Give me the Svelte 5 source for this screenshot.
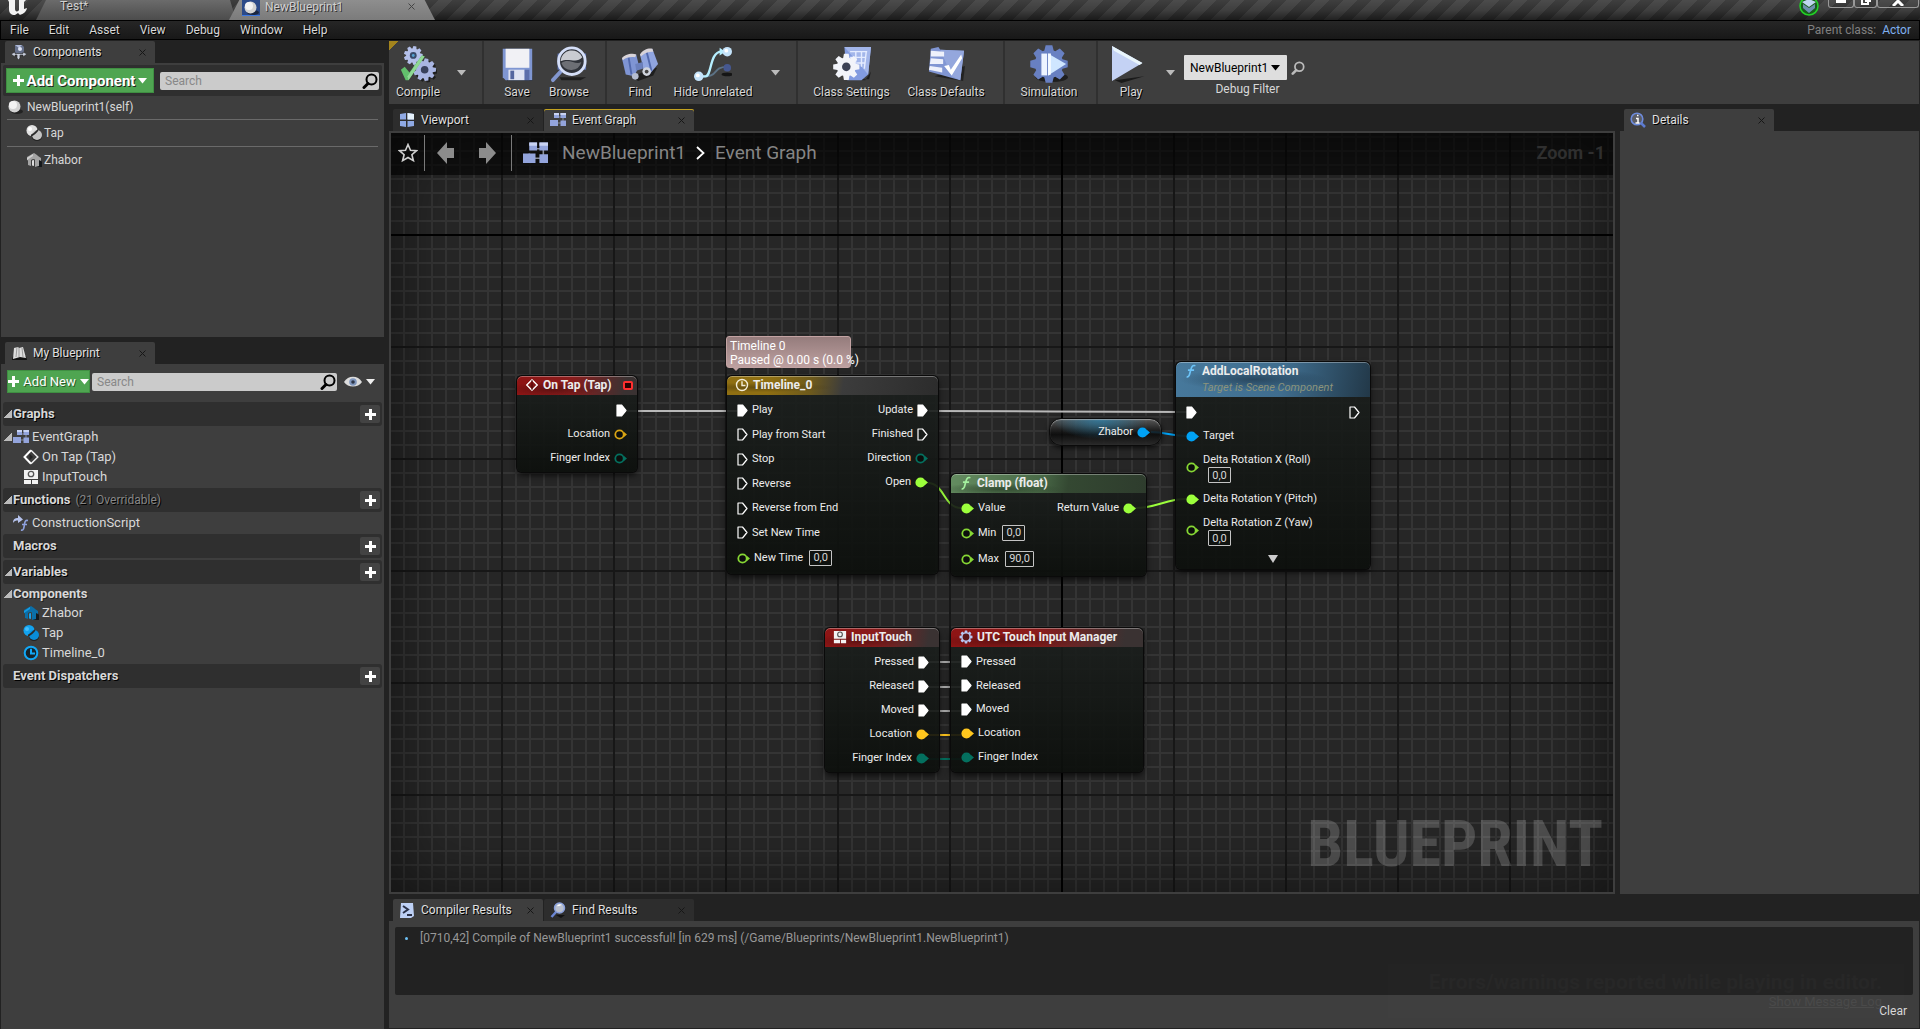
<script>
  const menus = ['File', 'Edit', 'Asset', 'View', 'Debug', 'Window', 'Help'];

  const toolGroups = [
    { name: 'compile', items: [{ icon: 'compile', label: 'Compile', w: 56 }], drop: 'Compile options' },
    { name: 'asset', items: [{ icon: 'save', label: 'Save', w: 52 }, { icon: 'browse', label: 'Browse', w: 52 }] },
    { name: 'lookup', items: [{ icon: 'find', label: 'Find', w: 52 }, { icon: 'hide', label: 'Hide Unrelated', w: 94 }], drop: 'Hide options' },
    { name: 'class', items: [{ icon: 'settings', label: 'Class Settings', w: 93 }, { icon: 'defaults', label: 'Class Defaults', w: 96 }] },
    { name: 'sim', items: [{ icon: 'simulate', label: 'Simulation', w: 74 }] },
    { name: 'play', items: [{ icon: 'play', label: 'Play', w: 54 }], drop: 'Play options' }
  ];

  const sections = [
    { title: 'Graphs', open: true, items: [
      { icon: 'graph', label: 'EventGraph', level: 'root', open: true },
      { icon: 'event', label: 'On Tap (Tap)', level: 'child' },
      { icon: 'touch', label: 'InputTouch', level: 'child' }
    ] },
    { title: 'Functions', note: '(21 Overridable)', open: true, items: [
      { icon: 'construct', label: 'ConstructionScript', level: 'root' }
    ] },
    { title: 'Macros', items: [] },
    { title: 'Variables', open: true, items: [
      { label: 'Components', level: 'category', open: true },
      { icon: 'houseBlue', label: 'Zhabor', level: 'child' },
      { icon: 'tapBlue', label: 'Tap', level: 'child' },
      { icon: 'clockBlue', label: 'Timeline_0', level: 'child' }
    ] },
    { title: 'Event Dispatchers', items: [] }
  ];

  const white = '#ffffff';
  const gold = '#ffc61e';
  const teal = '#04705f';
  const lime = '#9cff3c';
  const blue = '#00a2f5';
  const goldDim = '#d9a514';
  const limeDim = '#86d734';

  const exec = (label, on) => ({ kind: 'exec', label, on, color: white });
  const data = (label, color, on, value) => ({ kind: 'data', label, color, on, value });

  const nodes = [
    { x: 126, y: 243, w: 120, h: 96, tone: 'red', icon: 'eventNode', title: 'On Tap (Tap)', delegate: true,
      ins: [], outs: [exec('', true), data('Location', goldDim), data('Finger Index', teal)] },
    { x: 336, y: 243, w: 211, h: 198, tone: 'amber', icon: 'clock', title: 'Timeline_0',
      ins: [exec('Play', true), exec('Play from Start'), exec('Stop'), exec('Reverse'), exec('Reverse from End'), exec('Set New Time'), data('New Time', limeDim, false, '0,0')],
      outs: [exec('Update', true), exec('Finished'), data('Direction', teal), data('Open', lime, true)] },
    { x: 560, y: 341, w: 195, h: 102, tone: 'olive', icon: 'fnGreen', title: 'Clamp (float)',
      ins: [data('Value', lime, true), data('Min', limeDim, false, '0,0'), data('Max', limeDim, false, '90,0')],
      outs: [data('Return Value', lime, true)] },
    { x: 785, y: 229, w: 194, h: 207, tone: 'blue', icon: 'fnBlue', title: 'AddLocalRotation', sub: 'Target is Scene Component', more: true,
      ins: [exec('', true), data('Target', blue, true), { ...data('Delta Rotation X (Roll)', limeDim, false, '0,0'), stacked: true }, data('Delta Rotation Y (Pitch)', lime, true), { ...data('Delta Rotation Z (Yaw)', limeDim, false, '0,0'), stacked: true }],
      outs: [exec('')] },
    { x: 434, y: 495, w: 114, h: 144, tone: 'red', icon: 'touch', title: 'InputTouch',
      ins: [], outs: [exec('Pressed', true), exec('Released', true), exec('Moved', true), data('Location', gold, true), data('Finger Index', teal, true)] },
    { x: 560, y: 495, w: 192, h: 144, tone: 'red', icon: 'cog', title: 'UTC Touch Input Manager',
      ins: [exec('Pressed', true), exec('Released', true), exec('Moved', true), data('Location', gold, true), data('Finger Index', teal, true)], outs: [] }
  ];

  const wires = [
    { d: 'M236 278H346', c: '#b8b8b8' },
    { d: 'M538 278C640 278 690 279 796 279', c: '#b8b8b8' },
    { d: 'M537 350C553 350 553 375 570 375', c: lime },
    { d: 'M744 375C765 375 775 366 795 366', c: lime },
    { d: 'M760 299C775 299 780 303 795 303', c: blue },
    { d: 'M538 529H570', c: '#a8a8a8' },
    { d: 'M538 554H570', c: '#a8a8a8' },
    { d: 'M538 578H570', c: '#a8a8a8' },
    { d: 'M538 602H570', c: gold },
    { d: 'M538 626H570', c: teal }
  ];

  function gear(cx, cy, outer, inner, teeth) {
    const pts = [];
    for (let i = 0; i < teeth; i++) {
      const a = (i / teeth) * Math.PI * 2;
      const s = Math.PI / teeth;
      for (const [k, r] of [[-0.85, inner], [-0.45, outer], [0.45, outer], [0.85, inner]]) {
        pts.push(`${(cx + Math.cos(a + k * s) * r).toFixed(1)} ${(cy + Math.sin(a + k * s) * r).toFixed(1)}`);
      }
    }
    return 'M' + pts.join('L') + 'Z';
  }
</script>

{#snippet caret()}
  <svg class="caret" width="9" height="6" viewBox="0 0 9 6" aria-hidden="true"><path d="M0 0h9L4.500 5.500z" fill="currentColor" /></svg>
{/snippet}

{#snippet plus()}
  <svg width="11" height="11" viewBox="0 0 11 11" aria-hidden="true"><path d="M4 0h3v4h4v3H7v4H4V7H0V4h4z" fill="#fff" /></svg>
{/snippet}

{#snippet lens()}
  <svg class="lens" width="16" height="16" viewBox="0 0 16 16" aria-hidden="true"><circle cx="9.500" cy="6.500" r="5" fill="none" stroke="currentColor" stroke-width="2" /><path d="M6 10.500L2 14.500" stroke="currentColor" stroke-width="3" stroke-linecap="round" /></svg>
{/snippet}

{#snippet icon(name, size)}
  {#if ['compile', 'save', 'browse', 'find', 'hide', 'settings', 'defaults', 'simulate', 'play'].includes(name)}
    <svg width={size} height={size} viewBox="0 0 40 40" aria-hidden="true">
      {#if name === 'compile'}
        <path d={gear(29, 28, 11.5, 8.5, 9)} fill="#111" opacity=".7" />
        <path d={gear(15, 11, 10, 7.5, 9)} fill="#b4c0ea" /><circle cx="15" cy="11" r="3.600" fill="#3a4a6a" /><circle cx="15" cy="11" r="1.500" fill="#55a0d0" />
        <path d={gear(27, 26, 12, 9, 9)} fill="#a9b5e2" /><circle cx="27" cy="26" r="4" fill="#39415c" />
        <path d="M2 26l4-3 5 6L24 11l3 1L10 37H7z" fill="#62c06c" /><path d="M24 11l3 1-17 25-1-4z" fill="#8fd894" />
      {:else if name === 'save'}
        <path d="M8 33h28v5H10z" fill="#111" opacity=".7" />
        <path d="M5 4h31v33H8l-3-3z" fill="#7f96d2" /><path d="M8 4h25v20H8z" fill="#f1f1f5" /><path d="M11 26h17v11H11z" fill="#dfe3f2" /><path d="M13 27h4v9h-4z" fill="#54669f" /><path d="M28 26h5v11h-5z" fill="#5c6eaa" />
      {:else if name === 'browse'}
        <path d="M10 34h28l-6 3H12z" fill="#111" opacity=".7" /><path d="M8 9h30v17H8z" fill="#5f76b8" />
        <path d="M13 26L3 37" stroke="#8397cf" stroke-width="4" stroke-linecap="round" /><circle cx="23" cy="17" r="14" fill="#30333a" stroke="#d5dff8" stroke-width="3" />
        <path d="M11 17a12 12 0 0 1 23-4C28 20 20 13 11 17z" fill="#c9cbd1" /><path d="M12 19c8-6 15 3 21-1a11 11 0 0 1-21 1z" fill="#6d6f75" />
      {:else if name === 'find'}
        <path d="M12 34l16-8 10-2-4 8-16 6z" fill="#111" opacity=".7" />
        <path d="M1 14l15-4 3 12-5 11-9-2z" fill="#7f95d4" /><path d="M20 10L33 4l6 16-10 12-5-5z" fill="#90a5e0" /><path d="M27 7l5 20M8 13l3 18" stroke="#5269ad" stroke-width="2" /><path d="M1 14c2-4 11-6 15-4l-1 3c-4-1-10 0-13 3zM20 10c3-5 9-7 13-6l1 3c-5 0-9 1-13 5z" fill="#d8d3d8" /><path d="M15 20l8-2v7l-7 2z" fill="#6b80bd" /><circle cx="15" cy="33" r="3.500" fill="#b5bdd0" /><circle cx="27" cy="28" r="4.500" fill="#d0d4dd" /><circle cx="27" cy="28" r="2" fill="#444" />
      {:else if name === 'hide'}
        <path d="M5 33c24 2 12-10 30-10" fill="none" stroke="#5c7285" stroke-width="2" /><path d="M5 33h7c7 0 4-26 17-26" fill="none" stroke="#b6efff" stroke-width="2.500" /><path d="M27 3l6 4-6 4z" fill="#b6efff" /><ellipse cx="35" cy="31" rx="6" ry="2" fill="#151515" /><circle cx="35" cy="24" r="4" fill="#465890" /><circle cx="35" cy="7" r="5" fill="#c4e3fa" /><circle cx="5" cy="33" r="5" fill="#c4e3fa" /><circle cx="34" cy="6" r="2" fill="#fff" /><circle cx="4" cy="32" r="2" fill="#fff" />
      {:else if name === 'settings'}
        <path d="M12 36h26l2-8-6 9z" fill="#111" opacity=".7" /><path d="M12 2h28l-3 29-7 6H15z" fill="#829be0" /><path d="M12 2h28l-3 29z" fill="#a3b6ea" /><path d="M18 7h18M18 13h17M25 19h9M24 7v18M30 7v16M35 7l-2 18" stroke="#e4ebff" stroke-width="1.500" fill="none" />
        <path d={gear(14, 23, 14, 10, 8)} fill="#f2f4fa" /><circle cx="14" cy="23" r="4.500" fill="#3b4256" />
      {:else if name === 'defaults'}
        <path d="M8 33l30 5 2-16z" fill="#111" opacity=".6" /><path d="M4 4l8-2 2 3 25 1-4 31L2 28z" fill="#8196d3" /><path d="M14 5l25 1-4 31-9-4z" fill="#94a7dd" /><path d="M4 6l14 1v5H4zM4 14l13 1v5H3zM3 22l13 2v5L2 26z" fill="#eef1fb" /><path d="M18 22l5-1 2 5L36 10l1 4-11 18z" fill="#fff" />
      {:else if name === 'simulate'}
        <ellipse cx="23" cy="34" rx="17" ry="5" fill="#111" opacity=".7" /><path d={gear(20, 20, 20, 15, 8)} fill="#6880c2" /><path d="M12 9h6v23h-6z" fill="#eef4ff" /><path d="M19 9l19 11-19 12z" fill="#cfe6ff" /><path d="M19 9h3v22l-3 1z" fill="#f5faff" />
      {:else}
        <path d="M3 37l31-4-24 7z" fill="#111" opacity=".8" /><path d="M0 1l32 18L0 38z" fill="#c4d2f4" /><path d="M0 1l32 18-3 2L2 6z" fill="#e9f5fb" />
      {/if}
    </svg>
  {:else}
    <svg width={size} height={size} viewBox="0 0 16 16" aria-hidden="true">
      {#if name === 'graph'}
        <path d="M7 5h4M4 8v3M13 5v6M6 11h5" stroke="#8a8f9c" stroke-width="1" /><path d="M4 1h5v5H4zM10.500 1H16v5h-5.500zM0 8h8v6H0zM10.500 8.500H16V14h-5.500z" fill="#93a4dc" /><path d="M4 1h5v2H4zM10.500 1H16v2h-5.500z" fill="#c9d3f3" />
      {:else if name === 'event'}
        <path d="M8 1.200L1.500 8 8 14.800" fill="none" stroke="#fff" stroke-width="2" /><path d="M8 1.200L14.800 8 8 14.800" fill="none" stroke="#eee" stroke-width="1.500" /><path d="M6.500 4.500v7L10 8z" fill="#222" />
      {:else if name === 'eventNode'}
        <path d="M8 2L2 8l6 6 6-6z" fill="none" stroke="#fff" stroke-width="1.600" /><path d="M8 2v12" stroke="#400" stroke-width="1" />
      {:else if name === 'touch'}
        <path d="M1 1h14v9H1zM1 11h7v4H1zM9 11h6v4H9z" fill="#f2f2f2" /><circle cx="8" cy="5" r="2.700" fill="none" stroke="#555" stroke-width="1.300" />
      {:else if name === 'construct'}
        <path d="M0 8c0-4 2-5 5-5V0l5 4.500L5 8V5.500C3 5.500 1 6 0 8z" fill="#b5c2ec" /><path d="M8 15c3 1 3-3 3.500-6s1-4 3.500-3.500M9 9.500h5" fill="none" stroke="#8ea1de" stroke-width="1.600" />
      {:else if name === 'house' || name === 'houseBlue'}
        <path d="M9 15h7v-5l-2-3z" fill="#15191c" /><path d="M8 1L1 5v3l1 .5V13l3 1V8l2-1 2 .5V15l4-1V8l2 1V6l-3-2-1-1z" fill={name === 'house' ? '#a4a4a4' : '#0b6fa8'} /><path d="M6 8.500L8 8v6l-2-.5z" fill={name === 'house' ? '#ddd' : '#19a2ea'} /><path d="M7 2L1 6v2l6-4z" fill={name === 'house' ? '#d0d0d0' : '#149be3'} />
      {:else if name === 'tap' || name === 'tapBlue'}
        <ellipse cx="11" cy="12" rx="5" ry="4" fill="#151515" opacity=".7" /><circle cx="6" cy="5.500" r="5.500" fill={name === 'tap' ? '#e2e2e2' : '#12a3f0'} /><circle cx="11" cy="10" r="5" fill={name === 'tap' ? '#c4c4c4' : '#0a8cd8'} /><path d="M5 10.500C8 10 10 7 12 5" stroke="#2a2a2a" stroke-width="1.600" fill="none" /><circle cx="4" cy="4" r="2" fill={name === 'tap' ? '#fff' : '#46bdfa'} />
      {:else if name === 'clock' || name === 'clockBlue'}
        <g fill="none" stroke={name === 'clock' ? '#f4eeda' : '#12a8f7'} stroke-width={name === 'clock' ? 1.6 : 2}><circle cx="8" cy="8" r="6.300" fill={name === 'clock' ? 'none' : '#16242c'} /><path d="M8 3.800V8.500h4" /></g>
      {:else if name === 'fnGreen' || name === 'fnBlue'}
        <path d="M3 14.500c3 1 3.500-3 4.500-7S9.500.800 13 2M4.500 7h7" fill="none" stroke={name === 'fnGreen' ? '#a4f09e' : '#6cc3f7'} stroke-width="1.900" />
      {:else if name === 'cog'}
        <path d={gear(8, 8, 7.5, 5.5, 8)} fill="#b7c6f2" /><circle cx="8" cy="8" r="3.900" fill="#5a1418" />
      {:else if name === 'components'}
        <path d="M4 1h7l2 2v7l-5 2-4-2z" fill="#66708a" /><path d="M4 1h7l-3 3z" fill="#aeb9d8" /><circle cx="9" cy="5" r="2" fill="#dfe4f5" /><path d="M0 10l4-2v1.500h8V8l4 2-4 3v-2H9v3L7.500 16 6 14v-3H4v2z" fill="#c9cfdd" stroke="#222" stroke-width=".6" />
      {:else if name === 'book'}
        <path d="M1 15h15l-1-4H2z" fill="#111" /><path d="M3 3l4-1 1 1 4-1 3 11-6-1-7 2z" fill="#dedede" /><path d="M6 2L5 12M8 3v9M11 3l1 9" stroke="#8a8a8a" stroke-width=".8" />
      {:else if name === 'viewport'}
        <path d="M1 2l6-1v6.500H1zM8.500 1L15 2v5.500H8.500zM1 9h6v6l-6-1zM8.500 9H15v5l-6.500 1z" fill="#8fa9e4" /><path d="M8.500 1L15 2v5.500H8.500z" fill="#e5f1fb" />
      {:else if name === 'info'}
        <circle cx="7" cy="7" r="5.800" fill="#5c5e66" stroke="#6d8bdc" stroke-width="1.600" /><path d="M11 11l4 4" stroke="#5d7bd0" stroke-width="2.500" /><path d="M6 6.500h2V11M5.500 11h4M7 3.500h1.500" stroke="#fff" stroke-width="1.500" fill="none" />
      {:else if name === 'log'}
        <path d="M2 1h12l1 13-3 2H1z" fill="#bdd0f5" /><path d="M4 4l5 3.500L4 11M8 13h5" stroke="#2a3148" stroke-width="2" fill="none" />
      {:else if name === 'glass'}
        <path d="M6 13h9l-4 3z" fill="#111" /><path d="M6 10l-4.500 5" stroke="#6b86d3" stroke-width="2.500" /><circle cx="9.500" cy="6" r="5" fill="#b9bfcd" stroke="#8ba1dc" stroke-width="1.500" /><path d="M7 4c1-2 4-2 5-1-2 0-3 2-5 1z" fill="#fff" />
      {:else if name === 'ball'}
        <ellipse cx="10" cy="12.500" rx="6" ry="2.500" fill="#111" opacity=".6" /><circle cx="7.500" cy="7.500" r="6" fill="#d3d3d3" /><circle cx="6" cy="6" r="4" fill="#f3f3f3" />
      {/if}
    </svg>
  {/if}
{/snippet}

{#snippet tab(ic, label, state)}
  <div class="tab {state}">
    {@render icon(ic, 16)}
    <span>{label}</span>
    <button class="close" aria-label="Close {label}"><svg width="7" height="7" viewBox="0 0 7 7" aria-hidden="true"><path d="M.5.5l6 6M6.500.500l-6 6" stroke="currentColor" /></svg></button>
  </div>
{/snippet}

{#snippet pinShape(p)}
  {#if p.kind === 'exec'}
    <svg class="pin" width="11" height="13" viewBox="0 0 11 13" aria-hidden="true"><path d="M1 1h4.500l4.500 5.500L5.500 12H1z" fill={p.on ? '#fff' : 'none'} stroke="#fff" stroke-width="1.200" stroke-linejoin="round" /></svg>
  {:else}
    <svg class="pin" width="13" height="11" viewBox="0 0 13 11" aria-hidden="true"><circle cx="5.500" cy="5.500" r="4.200" fill={p.on ? p.color : '#0c0e0c'} stroke={p.color} stroke-width="1.800" /><path d="M10 3l3 2.500L10 8z" fill={p.color} /></svg>
  {/if}
{/snippet}

<div class="app">
  <header class="titlebar">
    <svg class="logo" width="26" height="20" viewBox="0 0 26 20" aria-hidden="true"><path d="M3 0h7v9c0 3 3 3 4 1V0h7l-2 2v7l3-1c-1 5-5 6-7 7l-2-2-3 2c-4 0-6-2-6-6V2z" fill="#f2f2f2" /></svg>
    <button class="wintab first">Test*</button>
    <div class="wintab second">
      <span class="thumb">{@render icon('ball', 16)}</span>
      <span>NewBlueprint1</span>
      <button class="close" aria-label="Close NewBlueprint1"><svg width="7" height="7" viewBox="0 0 7 7" aria-hidden="true"><path d="M.5.5l6 6M6.500.500l-6 6" stroke="currentColor" /></svg></button>
    </div>
    <div class="winctl">
      <svg class="badge" width="20" height="16" viewBox="0 0 20 16" aria-hidden="true"><circle cx="10" cy="6" r="9" fill="#195c1c" stroke="#22d326" stroke-width="1.500" /><path d="M3 2l7-3 7 3-7 5z" fill="#bfd6ef" /><path d="M4 4l6 4 6-4v4l-6 5-6-5z" fill="#6d8fae" /></svg>
      <button aria-label="Minimize" class="wb"><svg width="12" height="4" viewBox="0 0 12 4" aria-hidden="true"><path d="M1 0h10v3H1z" fill="#fff" /></svg></button>
      <button aria-label="Restore" class="wb small"><svg width="10" height="6" viewBox="0 0 10 6" aria-hidden="true"><path d="M1 0v4h6V0M4 1h5V-2" fill="none" stroke="#fff" stroke-width="2" /></svg></button>
      <button aria-label="Close window" class="wb wide"><svg width="12" height="6" viewBox="0 0 12 6" aria-hidden="true"><path d="M1 6l5-5 5 5" fill="none" stroke="#fff" stroke-width="3" /></svg></button>
    </div>
  </header>

  <nav class="menubar">
    {#each menus as m}<button>{m}</button>{/each}
    <p>Parent class: <a href="#actor">Actor</a></p>
  </nav>

  <div class="work">
    <aside class="left">
      <section class="comps">
        <div class="tabs">{@render tab('components', 'Components', 'on')}</div>
        <div class="pane">
          <div class="combar">
            <button class="green big">{@render plus()}<span>Add Component</span>{@render caret()}</button>
            <label class="search"><input type="text" placeholder="Search" aria-label="Search components" />{@render lens()}</label>
          </div>
          <ul class="tree">
            <li class="self">{@render icon('ball', 16)}<span>NewBlueprint1(self)</span></li>
            <li>{@render icon('tap', 16)}<span>Tap</span></li>
            <li>{@render icon('house', 16)}<span>Zhabor</span></li>
          </ul>
        </div>
      </section>
      <section class="mybp">
        <div class="tabs">{@render tab('book', 'My Blueprint', 'on')}</div>
        <div class="pane">
          <div class="newbar">
            <button class="green">{@render plus()}<span>Add New</span>{@render caret()}</button>
            <label class="search"><input type="text" placeholder="Search" aria-label="Search blueprint" />{@render lens()}</label>
            <button class="eye" aria-label="View options">
              <svg width="18" height="12" viewBox="0 0 18 12" aria-hidden="true"><path d="M0 6c4-7 14-7 18 0-4 6-14 6-18 0z" fill="#dcdcdc" /><circle cx="9" cy="6" r="3.800" fill="#7f96bd" /><circle cx="9" cy="6" r="1.800" fill="#2d3648" /></svg>
              {@render caret()}
            </button>
          </div>
          {#each sections as s}
            <div class="sec">
              <h2><i class:open={s.open}></i>{s.title}{#if s.note}<small>{s.note}</small>{/if}<button aria-label="Add to {s.title}">{@render plus()}</button></h2>
              {#if s.items.length}
                <ul>
                  {#each s.items as it}
                    <li class={it.level}><i class:open={it.open}></i>{#if it.icon}{@render icon(it.icon, 16)}{/if}<span>{it.label}</span></li>
                  {/each}
                </ul>
              {/if}
            </div>
          {/each}
        </div>
      </section>
    </aside>

    <div class="main">
      <div class="toolbar">
        {#each toolGroups as g}
          <div class="group {g.name}">
            {#each g.items as b}
              <button class="tool" style:width="{b.w}px">{@render icon(b.icon, 38)}<span>{b.label}</span></button>
            {/each}
            {#if g.drop}<button class="drop" aria-label={g.drop}>{@render caret()}</button>{/if}
          </div>
        {/each}
        <div class="filter">
          <div class="pick">
            <select id="debug"><option>NewBlueprint1</option></select>
            {@render caret()}
          </div>
          <label for="debug">Debug Filter</label>
        </div>
        <button class="seek" aria-label="Find debug object">{@render lens()}</button>
      </div>

      <div class="mid">
        <section class="center">
          <div class="tabs">{@render tab('viewport', 'Viewport', 'off')}{@render tab('graph', 'Event Graph', 'on active')}</div>
          <div class="canvas">
            <div class="crumbs">
              <button aria-label="Favorite"><svg width="20" height="20" viewBox="0 0 20 20" aria-hidden="true"><path d="M10 1.500l2.500 5.700 6 .5-4.600 4 1.500 6L10 14.500l-5.400 3.200 1.500-6-4.600-4 6-.5z" fill="none" stroke="#d0d0d0" stroke-width="1.600" /></svg></button>
              <i></i>
              <button class="nav" aria-label="Back"><svg width="17" height="22" viewBox="0 0 17 22" aria-hidden="true"><path d="M0 11L10 0v6h7v10h-7v6z" fill="#8c8c8c" /></svg></button>
              <button class="nav fwd" aria-label="Forward"><svg width="17" height="22" viewBox="0 0 17 22" aria-hidden="true"><path d="M17 11L7 0v6H0v10h7v6z" fill="#8c8c8c" /></svg></button>
              <i></i>
              <span class="gico">{@render icon('graph', 25)}</span>
              <span>NewBlueprint1</span>
              <svg width="9" height="14" viewBox="0 0 9 14" aria-hidden="true"><path d="M1 1l6.500 6L1 13" fill="none" stroke="#fff" stroke-width="1.800" /></svg>
              <span>Event Graph</span>
              <b>Zoom -1</b>
            </div>
            <div class="mark">BLUEPRINT</div>
            <svg class="wires" aria-hidden="true">
              {#each wires as w}<path d={w.d} stroke={w.c} />{/each}
            </svg>
            <div class="note">Timeline 0<br />Paused @ 0.00 s (0.0 %)</div>
            <div class="getter"><span>Zhabor</span>{@render pinShape({ kind: 'data', color: blue, on: true })}</div>
            {#each nodes as n}
              <article class="node {n.tone}" style:left="{n.x}px" style:top="{n.y}px" style:width="{n.w}px" style:height="{n.h}px">
                <h3>
                  {@render icon(n.icon, 14)}
                  <span>{n.title}{#if n.sub}<em>{n.sub}</em>{/if}</span>
                  {#if n.delegate}<svg class="dele" width="10" height="9" viewBox="0 0 10 9" aria-hidden="true"><rect x="1" y="1" width="8" height="7" rx="1" fill="#2a0404" stroke="#ff2f2f" stroke-width="2" /></svg>{/if}
                </h3>
                <div class="io">
                  <div class="ins">
                    {#each n.ins as p}
                      <div class="row" class:stacked={p.stacked} class:valued={p.value && !p.stacked}>
                        {@render pinShape(p)}
                        <div class="lab"><span>{p.label}</span>{#if p.value}<input class="value" class:long={p.value.length > 3} value={p.value} aria-label={p.label} />{/if}</div>
                      </div>
                    {/each}
                  </div>
                  <div class="outs">
                    {#each n.outs as p}<div class="row"><span>{p.label}</span>{@render pinShape(p)}</div>{/each}
                  </div>
                </div>
                {#if n.more}<button class="more" aria-label="Show more pins"><svg width="10" height="8" viewBox="0 0 10 8" aria-hidden="true"><path d="M0 0h10L5 8z" fill="#ccc" /></svg></button>{/if}
              </article>
            {/each}
          </div>
        </section>
        <aside class="details">
          <div class="tabs">{@render tab('info', 'Details', 'on')}</div>
          <div class="pane"></div>
        </aside>
      </div>

      <section class="results">
        <div class="tabs">{@render tab('log', 'Compiler Results', 'on')}{@render tab('glass', 'Find Results', 'off')}</div>
        <div class="pane">
          <div class="log"><p><i></i>[0710,42] Compile of NewBlueprint1 successful! [in 629 ms] (/Game/Blueprints/NewBlueprint1.NewBlueprint1)</p></div>
          <button class="clear">Clear</button>
          <div class="toast"><strong>Errors/warnings reported while playing in editor.</strong><a href="#log">Show Message Log</a></div>
        </div>
      </section>
    </div>
  </div>
</div>

<style>
  :global(body) { background: #222; }
  .app { font: 12px/16px Roboto, "Liberation Sans", sans-serif; color: #d8d8d8; background: #222; min-height: 100vh; display: flex; flex-direction: column; overflow: hidden; }
  .app :is(button, input, select) { font: inherit; color: inherit; background: none; border: 0; padding: 0; margin: 0; border-radius: 0; }
  .app :is(button, a) { cursor: pointer; }
  .app svg { flex: none; display: block; }
  ul, h2, h3, p { margin: 0; padding: 0; list-style: none; font-size: inherit; }

  .titlebar { height: 20px; display: flex; align-items: flex-start; overflow: hidden; background: linear-gradient(#fff1, #0000 50%, #0007), repeating-linear-gradient(135deg, #313131 0 10px, #3f3f3f 10px 20px); }
  .logo { width: 36px; }
  .app .wintab { height: 20px; box-sizing: border-box; display: flex; align-items: flex-start; color: #d0d0d0; }
  .app .first { width: 200px; padding: 0 24px; line-height: 12px; background: linear-gradient(#6b6b6b, #4c4c4c); clip-path: polygon(5% 0, 97% 0, 100% 100%, 0 100%); text-shadow: 1px 1px 0 #222; }
  .app .second { width: 206px; margin-left: -7px; padding: 0 20px 0 13px; line-height: 14px; gap: 5px; background: linear-gradient(#8e8e8e, #7b7b7b); clip-path: polygon(5% 0, 95% 0, 100% 100%, 0 100%); text-shadow: 1px 1px 0 #333; }
  .thumb { background: #2c4a88; height: 15px; width: 18px; display: flex; justify-content: center; overflow: hidden; border-bottom: 1px solid #3c78e0; }
  .winctl { margin-left: auto; display: flex; align-items: flex-start; padding-right: 1px; }
  .badge { margin-right: 9px; }
  .app .wb { width: 26px; height: 8px; box-sizing: border-box; border: 1px solid #999; border-top: 0; border-radius: 0 0 3px 3px; display: flex; justify-content: center; }
  .app .small { width: 23px; }
  .app .wide { width: 42px; }

  .menubar { height: 20px; box-sizing: border-box; border: 1px solid #000; background: linear-gradient(#262626, #181818); display: flex; align-items: center; padding: 0 8px 0 0; }
  .app .menubar button { padding: 0 10px 0 9px; margin-right: 1px; text-shadow: 1px 1px 0 #000; }
  .menubar p { margin-left: auto; color: #808080; }
  .menubar a { color: #7fb0f0; text-decoration: none; margin-left: 3px; }

  .work { flex: 1; display: flex; gap: 5px; padding: 1px 1px 0; }
  .left { width: 383px; flex: none; display: flex; flex-direction: column; gap: 5px; }
  .main { flex: 1; min-width: 0; display: flex; flex-direction: column; }
  .pane { background: #3e3e3e; }
  .tabs { display: flex; padding-left: 4px; gap: 1px; height: 22px; }
  .tab { width: 150px; box-sizing: border-box; display: flex; align-items: center; gap: 6px; padding: 0 9px 0 6px; background: #2d2d2d; border-radius: 2px 2px 0 0; text-shadow: 1px 1px 0 #000; }
  .tab.on { background: #3e3e3e; }
  .tab.active { box-shadow: inset 0 1px 0 #c4a21f; }
  .tab span { white-space: nowrap; color: #e0e0e0; }
  .app .close { margin-left: auto; color: #161616; display: flex; height: 7px; }
  .app .second .close { color: #444; margin-top: 3px; }

  .comps { display: flex; flex-direction: column; }
  .comps .pane { height: 274px; padding: 2px; box-sizing: border-box; }
  .combar { background: #2f2f2f; height: 31px; display: flex; align-items: center; gap: 6px; padding: 0 3px; border-radius: 2px; }
  .app .green { background: #4fa551; box-shadow: inset 0 0 0 1px #3f8f42; color: #fff; height: 23px; width: 83px; display: flex; align-items: center; justify-content: center; gap: 4px; font-size: 13px; text-shadow: 1px 1px 0 #2c5c2d; }
  .app .green.big { width: 148px; height: 25px; font-size: 15px; font-weight: 700; gap: 3px; text-shadow: 1px 1px 0 #222; }
  .green span { white-space: nowrap; }
  .search { flex: 1; min-width: 0; height: 18px; background: #cbcbcb; border-radius: 2px; display: flex; align-items: center; color: #000; padding: 0 1px 0 5px; }
  .search input { flex: 1; min-width: 0; outline: 0; }
  .search input::placeholder { color: #888; opacity: 1; }
  .tree { padding: 0 4px; }
  .tree li { height: 26px; display: flex; align-items: center; gap: 2px; padding-left: 19px; border-top: 1px solid #6a6a6a; }
  .tree .self { height: 23px; box-sizing: border-box; padding-bottom: 2px; border: 0; padding-left: 0; gap: 4px; }
  .mybp { flex: 1; display: flex; flex-direction: column; }
  .mybp .pane { flex: 1; padding: 6px 2px 0; }
  .newbar { display: flex; align-items: center; gap: 2px; padding: 0 4px 9px; height: 23px; }
  .app .eye { display: flex; align-items: center; gap: 4px; width: 32px; justify-content: center; margin: 0 3px 0 4px; color: #eee; }
  .sec { margin-bottom: 2px; }
  .sec:has(ul) { margin-bottom: 1px; }
  h2 { height: 24px; background: #2f2f2f; border-radius: 3px; display: flex; align-items: center; font-size: 13px; text-shadow: 1px 1px 0 #000; padding-right: 2px; }
  h2 small { font-size: 12px; font-weight: 400; color: #868686; margin-left: 5px; }
  .app h2 button { margin-left: auto; width: 20px; height: 18px; background: #434343; border-radius: 2px; display: flex; align-items: center; justify-content: center; }
  .sec i { width: 10px; flex: none; height: 8px; }
  .sec i.open { background: linear-gradient(135deg, #0000 50%, #bbb 50%); width: 8px; margin: 0 1px; height: 8px; }
  .sec ul { padding-top: 1px; }
  .sec li { height: 20px; display: flex; align-items: center; font-size: 13px; gap: 3px; }
  .sec li i { margin-right: -3px; }
  .sec li i.open { margin: 0 -2px 0 1px; }
  .sec li.child { padding-left: 10px; }
  .sec li.category { height: 18px; font-weight: 700; text-shadow: 1px 1px 0 #222; }

  .toolbar { height: 63px; background: #3e3e3e linear-gradient(135deg, #a3841d 7px, #0000 7px) no-repeat; display: flex; }
  .group { display: flex; align-items: center; padding-left: 7px; border-left: 2px solid #303030; }
  .group.compile { padding: 0 6px 0 0; border-color: #0000; border-left-width: 1px; }
  .group.asset { padding-right: 10px; }
  .group.lookup { padding-right: 6px; }
  .group.class { padding-right: 9px; }
  .group.sim { padding-right: 10px; }
  .group.play { padding-left: 6px; }
  .app .tool { display: flex; flex-direction: column; align-items: center; white-space: nowrap; text-shadow: 1px 1px 0 #000; gap: 1px; }
  .app .drop { width: 30px; display: flex; justify-content: center; color: #bbb; }
  .app .play .drop { width: 24px; }
  .filter { display: flex; flex-direction: column; padding: 14px 0 0 2px; text-align: center; }
  .pick { display: flex; align-items: center; background: #dedede; color: #000; height: 25px; width: 103px; border-radius: 1px; }
  .pick select { appearance: none; flex: 1; min-width: 0; padding-left: 6px; height: 25px; }
  .pick .caret { margin-right: 7px; pointer-events: none; }
  .filter label { padding-left: 24px; line-height: 18px; }
  .app .seek { align-self: flex-start; margin: 19px 0 0 4px; color: #bbb; }
  .seek .lens { width: 14px; }

  .mid { flex: 1; display: flex; gap: 5px; padding-top: 5px; }
  .center { flex: 1; min-width: 0; display: flex; flex-direction: column; }
  .details { width: 299px; flex: none; display: flex; flex-direction: column; }
  .details .pane { flex: 1; }
  .canvas { flex: 1; position: relative; overflow: hidden; border: 2px solid #3e3e3e; min-height: 700px;
    background:
      linear-gradient(90deg, #000 2px, #0000 2px) 670px 0 / 896px 100%,
      linear-gradient(#000 2px, #0000 2px) 0 101px / 100% 896px,
      linear-gradient(90deg, #171717 2px, #0000 2px) 110px 0 / 112px 100%,
      linear-gradient(#171717 2px, #0000 2px) 0 101px / 100% 112px,
      linear-gradient(90deg, #343434 2px, #0000 2px) 12px 0 / 14px 100%,
      linear-gradient(#343434 2px, #0000 2px) 0 3px / 100% 14px,
      #262626; }
  .canvas::before { content: ''; position: absolute; inset: 0; box-shadow: inset 0 0 70px #0008; }
  .crumbs { position: absolute; inset: 0 0 auto; height: 42px; background: #0009; display: flex; align-items: center; font-size: 19px; color: #858585; padding: 0 8px 2px 0; white-space: nowrap; box-sizing: border-box; }
  .app .crumbs button { padding: 0 6px 0 7px; }
  .crumbs i { width: 1px; height: 36px; background: #7a7a7a; }
  .app .crumbs .nav { padding: 0 0 0 12px; }
  .app .crumbs .fwd { padding: 0 15px 0 25px; }
  .gico { margin: 0 14px 0 11px; }
  .crumbs > svg { margin: 0 10px; }
  .crumbs b { margin-left: auto; font-size: 18px; color: #2f2f2f; }
  .mark { position: absolute; right: 10px; bottom: 15px; font: 700 64px/64px "Roboto Condensed", "Liberation Sans Narrow", Roboto, sans-serif; color: #ffffff2e; }
  .wires { position: absolute; inset: 0; width: 100%; height: 100%; }
  .wires path { fill: none; stroke-width: 2; }
  .note { position: absolute; left: 335px; top: 203px; width: 125px; height: 32px; box-sizing: border-box; padding: 2px 3px; line-height: 14px; background: linear-gradient(#957c7c, #bda0a0); border: 1px solid #c3a3a3; border-radius: 3px; color: #fff; white-space: nowrap; }
  .note::after { content: ''; position: absolute; left: 5px; top: 100%; border: 4px solid #0000; border-top-color: #bda0a0; }
  .getter { position: absolute; left: 658px; top: 285px; width: 113px; height: 28px; box-sizing: border-box; border-radius: 12px; border: 1px solid #0b0b0b; display: flex; align-items: center; justify-content: flex-end; gap: 4px; padding-right: 11px; font-size: 11px; color: #f0f0f0; background: radial-gradient(ellipse at 45% 0, #2c7fa8d0, #0000 55%), linear-gradient(#666c, #1a1a1ae0 45%, #0c0c0ce0 60%, #2a2a2ae0); box-shadow: inset 0 1px 1px #bbba, 0 2px 5px #000a; }

  .node { position: absolute; border-radius: 5px; background: linear-gradient(#1c201ee8, #0c0f0cec); box-shadow: 0 0 0 1px #0a0a0a, 0 3px 6px #000b; font-size: 11px; color: #ececec; display: flex; flex-direction: column; overflow: hidden; }
  h3 { font-size: 12px; line-height: 15px; display: flex; gap: 4px; align-items: flex-start; height: 19px; flex: none; padding: 2px 4px 0 8px; box-sizing: border-box; white-space: nowrap; box-shadow: inset 0 1px 0 #fff5; border-radius: 5px 5px 0 0; }
  .red h3 { background: radial-gradient(ellipse at 30% 70%, #300a0a80, #0000 40%), linear-gradient(100deg, #8e1414, #8a1c1c 45%, #3a3232 90%); }
  .amber h3 { background: radial-gradient(ellipse at 15% 60%, #3b2c0880, #0000 30%), linear-gradient(100deg, #8f6f12 20%, #6e5a1c 40%, #3c3c3c 55%, #2c2c2c); }
  .olive h3 { background: radial-gradient(ellipse at 25% 80%, #1a2a1a90, #0000 30%), linear-gradient(100deg, #648c60, #4a6b48 45%, #344832 60%, #2e3c2d); }
  .blue h3 { height: 35px; background: radial-gradient(ellipse at 40% 50%, #16283890, #0000 45%), linear-gradient(100deg, #47799c, #3f6d8e 55%, #223848); }
  h3 em { display: block; font-size: 11px; font-weight: 400; font-style: italic; color: #8b947c; line-height: 17px; }
  .dele { margin: 3px 0 0 auto; }
  .io { flex: 1; display: flex; justify-content: space-between; padding: 3px 10px; min-height: 0; }
  .olive .io { padding-bottom: 4px; }
  .ins { display: flex; flex-direction: column; justify-content: space-between; }
  .blue .ins { justify-content: flex-start; }
  .row { display: flex; align-items: center; height: 24px; gap: 4px; white-space: nowrap; }
  .row.valued { height: 26px; }
  .row.stacked { height: 39px; }
  .outs .row { justify-content: flex-end; }
  .lab { display: flex; align-items: center; gap: 6px; }
  .stacked .lab { display: block; line-height: 15px; }
  .stacked .lab span { display: block; }
  .app .value { width: 23px; height: 16px; box-sizing: border-box; border: 1px solid #c4c4c4; text-align: center; color: #d6d6d6; display: block; border-radius: 1px; }
  .app .value.long { width: 29px; }
  .app .stacked .value { margin-left: 5px; }
  .app .more { position: absolute; bottom: 6px; left: 0; right: 0; display: flex; justify-content: center; }

  .results { padding-top: 5px; display: flex; flex-direction: column; }
  .results .pane { height: 107px; position: relative; box-sizing: border-box; padding: 6px; display: flex; flex-direction: column; margin-bottom: 1px; }
  .log { background: #222; height: 68px; border-radius: 2px; padding: 3px 10px; box-sizing: border-box; }
  .log p { color: #989898; display: flex; align-items: center; }
  .log i { width: 3px; height: 3px; border-radius: 2px; background: #6dc1f5; margin-right: 12px; }
  .app .clear { align-self: flex-end; margin: 8px 6px 0 0; color: #d8d8d8; }
  .toast { position: absolute; right: 15px; bottom: 10px; width: 516px; height: 54px; box-sizing: border-box; padding: 6px 22px 0; display: flex; flex-direction: column; align-items: flex-end; background: #ffffff02; pointer-events: none; white-space: nowrap; }
  .toast strong { font-size: 21px; line-height: 24px; color: #272727; }
  .toast a { color: #4a4a4a; font-size: 13px; }
</style>
